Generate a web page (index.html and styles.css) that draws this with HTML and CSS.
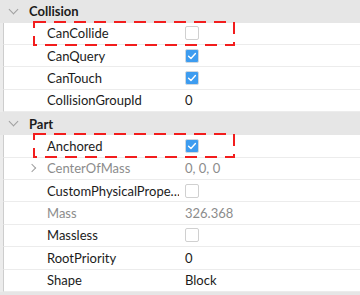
FILE: index.html
```html
<!DOCTYPE html>
<html>
<head>
<meta charset="utf-8">
<link rel="stylesheet" href="styles.css">
</head>
<body>
<div class="panel">
  <div class="header"><span class="chev-down"></span><span class="htext">Collision</span></div>
  <div class="row"><div class="name">CanCollide</div><div class="val"><span class="cb"></span></div></div>
  <div class="row"><div class="name">CanQuery</div><div class="val"><span class="cb on"><svg viewBox="0 0 14 14"><polyline points="3,7.2 5.8,10 11,4"/></svg></span></div></div>
  <div class="row"><div class="name">CanTouch</div><div class="val"><span class="cb on"><svg viewBox="0 0 14 14"><polyline points="3,7.2 5.8,10 11,4"/></svg></span></div></div>
  <div class="row"><div class="name">CollisionGroupId</div><div class="val">0</div></div>
  <div class="header h2"><span class="chev-down"></span><span class="htext">Part</span></div>
  <div class="row"><div class="name">Anchored</div><div class="val"><span class="cb on"><svg viewBox="0 0 14 14"><polyline points="3,7.2 5.8,10 11,4"/></svg></span></div></div>
  <div class="row"><div class="name dim"><span class="chev-right"></span>CenterOfMass</div><div class="val dim">0, 0, 0</div></div>
  <div class="row"><div class="name"><span class="trunc">CustomPhysicalPrope…</span></div><div class="val"><span class="cb"></span></div></div>
  <div class="row"><div class="name dim">Mass</div><div class="val dim">326.368</div></div>
  <div class="row"><div class="name">Massless</div><div class="val"><span class="cb"></span></div></div>
  <div class="row"><div class="name">RootPriority</div><div class="val">0</div></div>
  <div class="row"><div class="name">Shape</div><div class="val">Block</div></div>
  <div class="header tail"></div>

  <svg class="mark m1" width="204" height="26" viewBox="0 0 204 26"><rect x="1" y="1" width="200" height="23"/></svg>
  <svg class="mark m2" width="204" height="26" viewBox="0 0 204 26"><rect x="1" y="1" width="200" height="23"/></svg>
</div>
</body>
</html>
```

FILE: styles.css
```css
html, body {
  margin: 0;
  padding: 0;
  background: #ffffff;
}
body {
  width: 360px;
  height: 295px;
  overflow: hidden;
  font-family: "Lato", "Open Sans", sans-serif;
  font-size: 13px;
  color: #1b1b1b;
}
.panel {
  position: relative;
  display: flex;
  flex-direction: column;
  background: #ececec;
  height: 295px;
}
.header {
  height: 22.6px;
  flex: none;
  background: #e6e6e6;
  display: flex;
  align-items: center;
  box-sizing: border-box;
}
.h2 {
  height: 23px;
}
.tail {
  height: 6px;
}
.htext {
  font-weight: 700;
  color: #1b1b1b;
  margin-left: 12px;
}
.chev-down {
  width: 6px;
  height: 6px;
  border-right: 1.2px solid #a0a0a0;
  border-bottom: 1.2px solid #a0a0a0;
  transform: rotate(45deg);
  margin-left: 10px;
  margin-top: -4px;
}
.row {
  flex: none;
  height: 22.4px;
  box-sizing: border-box;
  margin-left: 3px;
  border-left: 1px solid #cdcdcd;
  border-bottom: 1px solid #ececec;
  background: #ffffff;
  display: grid;
  grid-template-columns: 176px 1fr;
  align-items: center;
}
.name {
  padding-left: 43px;
  display: flex;
  align-items: center;
  position: relative;
  white-space: nowrap;
}
.trunc {
  display: block;
  width: 132px;
  overflow: hidden;
}
.val {
  padding-left: 5px;
  display: flex;
  align-items: center;
}
.dim {
  color: #8c8c8c;
}
.chev-right {
  position: absolute;
  left: 25px;
  top: 50%;
  width: 5px;
  height: 5px;
  border-right: 1.2px solid #a0a0a0;
  border-bottom: 1.2px solid #a0a0a0;
  transform: translateY(-50%) rotate(-45deg);
}
.cb {
  width: 14px;
  height: 14px;
  box-sizing: border-box;
  border: 1.5px solid #d0d0d0;
  border-radius: 2px;
  background: #ffffff;
  display: block;
}
.cb.on {
  background: #3d9cf0;
  border-color: #cfd8e0;
  border-width: 1px;
}
.cb svg {
  width: 12px;
  height: 12px;
  display: block;
}
.cb polyline {
  fill: none;
  stroke: #ffffff;
  stroke-width: 1.6;
  stroke-linecap: round;
  stroke-linejoin: round;
}
.mark {
  position: absolute;
  left: 33px;
}
.mark rect {
  fill: none;
  stroke: #f21d1d;
  stroke-width: 2;
  stroke-dasharray: 12 8;
}
.m1 {
  top: 21px;
}
.m2 {
  top: 133px;
}
```
